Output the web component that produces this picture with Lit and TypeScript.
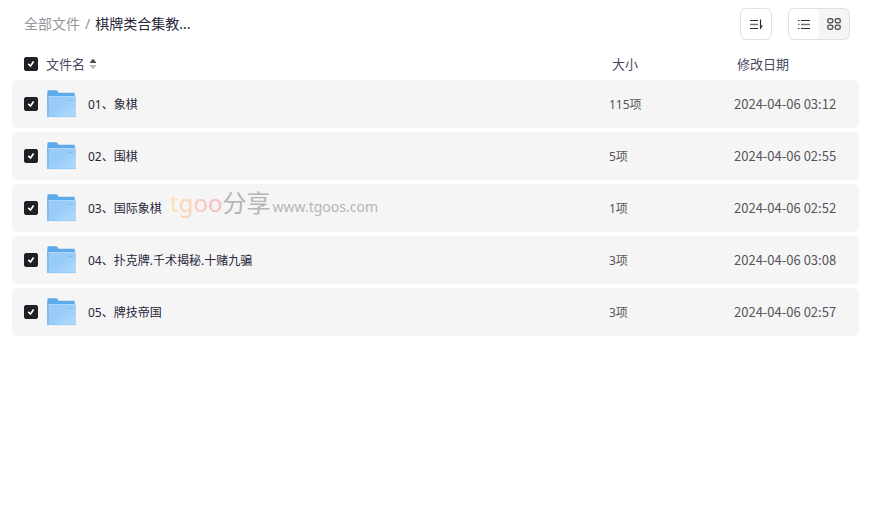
import { LitElement, html, css, svg } from "lit";
import { customElement, property } from "lit/decorators.js";

interface Entry {
  name: string;
  size: string;
  date: string;
}

const ENTRIES: Entry[] = [
  { name: "01、象棋", size: "115项", date: "2024-04-06 03:12" },
  { name: "02、围棋", size: "5项", date: "2024-04-06 02:55" },
  { name: "03、国际象棋", size: "1项", date: "2024-04-06 02:52" },
  { name: "04、扑克牌.千术揭秘.十赌九骗", size: "3项", date: "2024-04-06 03:08" },
  { name: "05、牌技帝国", size: "3项", date: "2024-04-06 02:57" },
];

@customElement("tick-box")
class TickBox extends LitElement {
  @property() label = "";

  static styles = css`
    :host {
      display: block;
      width: 14px;
      height: 14px;
    }
    .box {
      display: grid;
    }
    .input,
    .mark {
      grid-area: 1 / 1;
      width: 14px;
      height: 14px;
      margin: 0;
    }
    .input {
      appearance: none;
      border: 1px solid #b4b4ba;
      border-radius: 2px;
      background: #fff;
    }
    .input:checked {
      border-color: #202127;
      background: #202127;
    }
    .mark {
      visibility: hidden;
      pointer-events: none;
    }
    .input:checked + .mark {
      visibility: visible;
    }
  `;

  render() {
    return html`<label class="box">
      <input class="input" type="checkbox" aria-label=${this.label} checked />
      <svg class="mark" viewBox="0 0 14 14" fill="none" stroke="#fff" stroke-width="1.7">
        <path d="M4.3 6.9 L6.5 9 L9.6 4.6" />
      </svg>
    </label>`;
  }
}

const folder = svg`
  <defs>
    <linearGradient id="front" x1="0" y1="0" x2="1" y2="1">
      <stop offset="0" stop-color="#9bcdf8" />
      <stop offset="0.45" stop-color="#97cbf8" />
      <stop offset="1" stop-color="#b2dbfc" />
    </linearGradient>
  </defs>
  <path d="M0.4 1.2 Q0.4 0.3 1.3 0.3 H9.2 Q10 0.3 10.4 1 L11.4 2.7 H26.8 Q27.8 2.7 27.8 3.7 V12 H0.4 Z" fill="#5eaae9" />
  <path d="M0.4 6 H28.9 V27 H0.4 Z" fill="url(#front)" />
  <path d="M0.4 4 H1.4 V27 H0.4 Z" fill="#62aeeb" />
  <path d="M1.4 6.5 H28.6" stroke="#acd7fa" stroke-width="1" />
  <path d="M0.4 26.6 H29" stroke="#8cc5f4" stroke-width="0.8" />
  <path d="M22 10.5 H25.5" stroke="#80bcf1" stroke-width="1.2" />`;

@customElement("app-root")
class AppRoot extends LitElement {
  static styles = css`
    :host {
      display: block;
      padding: 8px 15px 0 12px;
      background: #fff;
      color: #28263b;
      font: 12px/20px "Noto Sans", "Noto Sans CJK SC", sans-serif;
    }
    .bar {
      display: flex;
      align-items: center;
      justify-content: space-between;
      padding: 0 9px 0 12px;
    }
    .crumbs {
      display: flex;
      gap: 5px;
      font-size: 14px;
      color: #94949c;
    }
    .crumb {
      color: inherit;
      text-decoration: none;
    }
    .current {
      color: #28263b;
    }
    .tools {
      display: flex;
      gap: 16px;
    }
    .group {
      display: flex;
      box-sizing: border-box;
      height: 32px;
      border: 1px solid #e0e0e2;
      border-radius: 6px;
      background: #f4f4f5;
      overflow: hidden;
    }
    .tool {
      display: grid;
      place-items: center;
      width: 30px;
      height: 30px;
      padding: 0;
      border: 0;
      border-radius: 5px;
      background: none;
      color: #2e2e32;
    }
    .active {
      background: #fff;
    }
    .list {
      position: relative;
    }
    .table {
      width: 100%;
      table-layout: fixed;
      border-collapse: separate;
      border-spacing: 0 4px;
    }
    .narrow {
      width: 125px;
    }
    .head,
    .cell {
      box-sizing: border-box;
      padding: 0;
      text-align: left;
      font-weight: 400;
    }
    .head {
      height: 32px;
      padding: 8px 0 0 3px;
      font-size: 13px;
      color: #4a4860;
    }
    .cell {
      height: 48px;
      background: #f5f5f5;
      color: #55545a;
    }
    .first {
      padding-left: 12px;
      color: #28263b;
      border-radius: 5px 0 0 5px;
    }
    .last {
      border-radius: 0 5px 5px 0;
    }
    .text {
      display: block;
      padding-top: 2px;
    }
    .date {
      font-family: "Noto Sans CJK SC", sans-serif;
      font-size: 13px;
    }
    .line {
      display: flex;
      align-items: center;
      gap: 8px;
    }
    .sort {
      display: flex;
      align-items: center;
      gap: 4px;
      padding: 0;
      border: 0;
      background: none;
      color: #4a4860;
      font: inherit;
    }
    .folder {
      width: 30px;
      height: 28px;
      margin: 0 3px 0 1px;
    }
    .watermark {
      position: absolute;
      top: 147px;
      left: 158px;
      display: flex;
      align-items: baseline;
      gap: 2px;
      font-size: 14px;
      line-height: 32px;
      color: #b5b5b8;
      pointer-events: none;
    }
    .brand {
      font-size: 24px;
    }
    .yellow {
      color: #f8e3b0;
    }
    .amber {
      color: #f9d5b8;
    }
    .peach {
      color: #fac9b9;
    }
    .pink {
      color: #fabcbc;
    }
  `;

  render() {
    return html`
      <header class="bar">
        <nav class="crumbs">
          <a class="crumb" href="#">全部文件</a>
          <span>/</span>
          <span class="current">棋牌类合集教...</span>
        </nav>
        <div class="tools">
          <div class="group">
            <button class="tool active" aria-label="排序">
              <svg width="16" height="16" viewBox="0 0 16 16" fill="none" stroke="currentColor" stroke-width="1.2">
                <path d="M2 4.5 H10 M2 12.5 H10 M12.5 3.5 V13" />
                <path d="M2 8.5 H10" stroke="#77777b" stroke-width="1.6" />
                <path d="M12.2 9.5 H15 L12.2 13.2 Z" fill="currentColor" stroke="none" />
              </svg>
            </button>
          </div>
          <div class="group">
            <button class="tool active" aria-label="列表">
              <svg width="16" height="16" viewBox="0 0 16 16" fill="none" stroke="currentColor" stroke-width="1.2">
                <path d="M2 4.5 H3.5 M2 12.5 H3.5 M5 4.5 H14 M5 12.5 H14" />
                <path d="M2 8.5 H3.5 M5 8.5 H14" stroke="#77777b" stroke-width="1.6" />
              </svg>
            </button>
            <button class="tool" aria-label="网格">
              <svg width="16" height="16" viewBox="0 0 16 16" fill="none" stroke="#5b5b5f" stroke-width="1.5">
                <rect x="1.8" y="2.8" width="4.9" height="4" rx="1.4" />
                <rect x="9.3" y="2.8" width="4.9" height="4" rx="1.4" />
                <rect x="1.8" y="9.2" width="4.9" height="4" rx="1.4" />
                <rect x="9.3" y="9.2" width="4.9" height="4" rx="1.4" />
              </svg>
            </button>
          </div>
        </div>
      </header>
      <main class="list">
        <table class="table">
          <colgroup>
            <col />
            <col class="narrow" />
            <col class="narrow" />
          </colgroup>
          <thead>
            <tr>
              <th class="head first">
                <div class="line">
                  <tick-box label="全选"></tick-box>
                  <button class="sort">
                    文件名
                    <svg width="8" height="12" viewBox="0 0 8 12">
                      <path d="M1 5 V4.2 L3.2 1.4 Q4 0.6 4.8 1.4 L7 4.2 V5 Z" fill="#4c4c50" />
                      <path d="M1 7 V7.8 L3.2 10.6 Q4 11.4 4.8 10.6 L7 7.8 V7 Z" fill="#b9b9bb" />
                    </svg>
                  </button>
                </div>
              </th>
              <th class="head">大小</th>
              <th class="head">修改日期</th>
            </tr>
          </thead>
          <tbody>
            ${ENTRIES.map(
              (e) => html`<tr>
                <td class="cell first">
                  <div class="line">
                    <tick-box label=${e.name}></tick-box>
                    <svg class="folder" viewBox="0 0 30 28">${folder}</svg>
                    <span class="text">${e.name}</span>
                  </div>
                </td>
                <td class="cell"><span class="text">${e.size}</span></td>
                <td class="cell last date">${e.date}</td>
              </tr>`
            )}
          </tbody>
        </table>
        <div class="watermark">
          <span class="brand"
            ><span class="yellow">t</span><span class="amber">g</span><span class="peach">o</span
            ><span class="pink">o</span>分享</span
          >
          <span>www.tgoos.com</span>
        </div>
      </main>
    `;
  }
}
